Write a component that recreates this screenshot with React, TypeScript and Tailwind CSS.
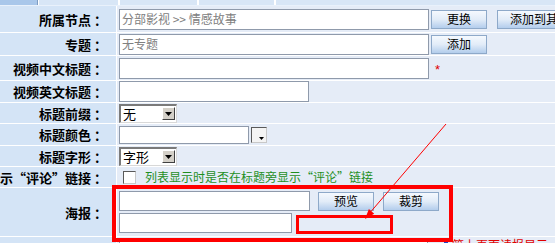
import React from "react";

const FONT = { fontFamily: '"Noto Sans CJK SC", "Noto Sans", sans-serif' };

function Btn({ children, w = "w-[56px]", h = "h-[19px]", extra = "" }: { children: React.ReactNode; w?: string; h?: string; extra?: string }) {
  return (
    <button
      className={`${w} ${h} ${extra} shrink-0 border border-[#8ea9c9] bg-linear-to-b from-[#f5f9fe] via-[#e2ecf8] to-[#b3cdec] text-[12px] leading-none text-black flex items-center justify-center`}
      style={FONT}
    >
      {children}
    </button>
  );
}

function TextBox({ w, h = "h-[21px]", value = "", gray = false }: { w: string; h?: string; value?: string; gray?: boolean }) {
  return (
    <div
      className={`${w} ${h} shrink-0 bg-white border border-[#8f9aab] flex items-center pl-[2px] text-[12px] leading-none whitespace-nowrap overflow-hidden ${gray ? "text-[#808080]" : "text-black"}`}
      style={FONT}
    >
      {value}
    </div>
  );
}

function Select({ value }: { value: string }) {
  return (
    <div className="w-[58px] h-[19px] shrink-0 bg-white border-t-2 border-l-2 border-b border-r border-t-[#7a7a7a] border-l-[#7a7a7a] border-b-[#d8d8d8] border-r-[#d8d8d8] flex items-center justify-between pl-[2px] pr-[1px]">
      <span className="text-[13px] leading-none text-black" style={FONT}>{value}</span>
      <div className="w-[13px] h-[13px] bg-[#d4d0c8] border border-t-white border-l-white border-b-[#404040] border-r-[#404040] flex items-center justify-center">
        <svg width="7" height="4" viewBox="0 0 7 4"><path d="M0 0h7L3.5 4z" fill="#000" /></svg>
      </div>
    </div>
  );
}

function Row({ label, h, children, col = false }: { label: string; h: string; children?: React.ReactNode; col?: boolean }) {
  return (
    <div className={`flex ${h} border-b border-white`}>
      <div
        className="w-[117px] shrink-0 bg-[#d4e4f6] border-r border-white flex items-center justify-end pr-[9px] overflow-hidden whitespace-nowrap font-bold text-[13px] leading-none text-black"
        style={FONT}
      >
        <span className="shrink-0">{label}</span>
      </div>
      <div className={`flex-1 min-w-0 overflow-hidden bg-[#e5ecf7] flex ${col ? "flex-col pt-[3px] gap-[1px]" : "items-center"} pl-[2px]`}>
        {children}
      </div>
    </div>
  );
}

export default function App() {
  return (
    <div className="relative w-[555px] h-[243px] overflow-hidden bg-[#e5ecf7]" style={FONT}>
      {/* tab strip */}
      <div className="flex h-[6px] border-b border-[#e9f1fb]">
        <div className="w-[38px] bg-[#a9c7ea] border-r border-[#7d9cc2]" />
        <div className="w-[81px] bg-[#d8e6f6] border-l border-white border-r border-[#7d9cc2]" />
        <div className="w-[79px] bg-[#d8e6f6] border-l border-white border-r border-[#7d9cc2]" />
        <div className="w-[77px] bg-[#d8e6f6] border-l border-white border-r border-[#7d9cc2]" />
        <div className="flex-1 bg-[#d8e6f6] border-l border-white" />
      </div>

      <Row label="所属节点 ：" h="h-[27px]">
        <TextBox w="w-[310px]" value="分部影视 >> 情感故事" gray />
        <Btn extra="ml-[2px]">更换</Btn>
        <Btn w="w-[110px]" extra="ml-[10px] !justify-start pl-[12px]">添加到其他栏目</Btn>
      </Row>
      <Row label="专题 ：" h="h-[23px]">
        <TextBox w="w-[310px]" value="无专题" gray />
        <Btn extra="ml-[2px]">添加</Btn>
      </Row>
      <Row label="视频中文标题 ：" h="h-[25px]">
        <TextBox w="w-[310px]" />
        <span className="ml-[6px] text-[13px] leading-none text-[#e00000] mt-[2px]" style={{ fontFamily: '"Liberation Sans", sans-serif' }}>*</span>
      </Row>
      <Row label="视频英文标题 ：" h="h-[22px]">
        <TextBox w="w-[190px]" />
      </Row>
      <Row label="标题前缀 ：" h="h-[21px]">
        <Select value="无" />
      </Row>
      <Row label="标题颜色 ：" h="h-[22px]">
        <TextBox w="w-[130px]" h="h-[18px]" />
        <div className="relative ml-[2px] w-[16px] h-[16px] bg-[#f4f4f4] border border-t-[#5a5a5a] border-l-[#5a5a5a] border-b-[#c8c8c8] border-r-[#c8c8c8]">
          <svg className="absolute right-[2px] bottom-[2px]" width="5" height="3" viewBox="0 0 5 3"><path d="M0 0h5L2.5 3z" fill="#000" /></svg>
        </div>
      </Row>
      <Row label="标题字形 ：" h="h-[21px]">
        <Select value="字形" />
      </Row>
      <Row label="是否显示“评论”链接 ：" h="h-[21px]">
        <div className="ml-[4px] w-[13px] h-[13px] bg-white border border-t-[#5a5a5a] border-l-[#5a5a5a] border-b-[#c8c8c8] border-r-[#c8c8c8]" />
        <span className="ml-[9px] text-[12px] leading-none text-[#1f8f1f] whitespace-nowrap" style={FONT}>
          列表显示时是否在标题旁显示“评论”链接
        </span>
      </Row>
      <Row label="海报 ：" h="h-[49px]" col>
        <div className="flex items-center h-[20px]">
          <TextBox w="w-[191px]" h="h-[20px]" />
          <Btn extra="ml-[8px]">预览</Btn>
          <Btn extra="ml-[9px]">裁剪</Btn>
        </div>
        <div className="flex items-center h-[20px] mt-[1px]">
          <TextBox w="w-[173px]" h="h-[20px]" />
        </div>
      </Row>
      <Row label="" h="h-[20px]">
        <div className="self-start mt-[1px] w-[309px] h-[20px] bg-white border border-[#8f9aab]" />
        <div className="self-start mt-[4px] ml-[16px] w-[4px] h-[4px] bg-[#2346c8]" />
        <span className="self-start mt-[2px] ml-[4px] text-[12px] leading-none text-[#e00000] whitespace-nowrap">第上页面读报显示</span>
      </Row>

      {/* red annotations */}
      <div className="absolute left-[112px] top-[185px] w-[341px] h-[57px] border-[4px] border-[#ff0000]" />
      <div className="absolute left-[296px] top-[215px] w-[97px] h-[19px] border-[3px] border-[#ff0000]" />
      <svg className="absolute left-0 top-0 pointer-events-none" width="555" height="243" viewBox="0 0 555 243">
        <line x1="446" y1="124" x2="371" y2="211.5" stroke="#ff0000" strokeWidth="1" />
        <polygon points="365,219 374.2,213.7 368.9,209.1" fill="#ff0000" />
      </svg>
    </div>
  );
}
